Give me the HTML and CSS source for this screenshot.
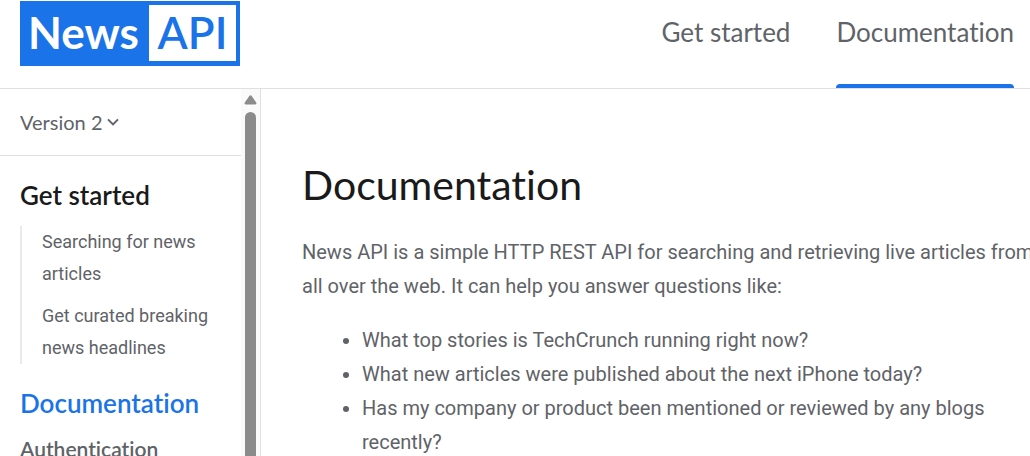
FILE: index.html
```html
<!DOCTYPE html>
<html lang="en">
<head>
<meta charset="utf-8">
<title>Documentation - News API</title>
<link rel="stylesheet" href="styles.css">
</head>
<body class="page">
<header class="header">
  <a class="logo" href="#"><span class="logo-news">News</span><span class="logo-api">API</span></a>
  <nav class="nav" aria-label="Main">
    <a class="nav-link" href="#">Get started</a>
    <a class="nav-link nav-link-active" href="#">Documentation</a>
  </nav>
</header>
<div class="layout">
  <aside class="sidebar">
    <div class="sidebar-content">
      <div class="version">
        <select class="version-select" aria-label="API version"><option>Version 2</option></select>
        <svg class="version-arrow" viewBox="0 0 12 8" aria-hidden="true"><path d="M1 1.4 6 6.4 11 1.4"/></svg>
      </div>
      <nav class="menu" aria-label="Documentation">
        <a class="menu-title" href="#">Get started</a>
        <ul class="submenu">
          <li><a class="submenu-link" href="#">Searching for news articles</a></li>
          <li><a class="submenu-link" href="#">Get curated breaking news headlines</a></li>
        </ul>
        <a class="menu-title menu-title-active" href="#">Documentation</a>
        <a class="menu-section" href="#">Authentication</a>
      </nav>
    </div>
    <div class="scrollbar" aria-hidden="true">
      <svg class="scroll-arrow" viewBox="0 0 13 10"><path d="M5.3 1 Q6.5-.5 7.7 1L12.2 7.6Q13 9.4 11.4 9.4H1.6Q0 9.4.8 7.6Z"/></svg>
      <div class="scroll-thumb"></div>
    </div>
  </aside>
  <main class="main">
    <article class="article">
      <h1 class="title">Documentation</h1>
      <p class="text">News API is a simple HTTP REST API for searching and retrieving live articles from all over the web. It can help you answer questions like:</p>
      <ul class="questions">
        <li>What top stories is TechCrunch running right now?</li>
        <li>What new articles were published about the next iPhone today?</li>
        <li>Has my company or product been mentioned or reviewed by any blogs recently?</li>
      </ul>
    </article>
  </main>
</div>
</body>
</html>
```
FILE: styles.css
```css
* { box-sizing: border-box; }
.page {
  margin: 0;
  height: 100vh;
  display: flex;
  flex-direction: column;
  overflow: hidden;
  background: #fff;
  color: #5f6368;
  font-family: Roboto, "Liberation Sans", sans-serif;
  font-variant-ligatures: none;
}
a { color: inherit; text-decoration: none; }
.header {
  flex: none;
  display: flex;
  justify-content: space-between;
  align-items: stretch;
  padding: 1px 16px 0 20px;
  border-bottom: 1px solid #e0e0e0;
  font-family: Lato, sans-serif;
}
.logo {
  display: flex;
  align-self: flex-start;
  width: 220px;
  height: 65px;
  padding: 4px 4px 5px 0;
  background: #1a73e8;
  font-size: 44px;
  font-weight: 700;
  line-height: 54px;
}
.logo-news { flex: 1; padding-right: 2px; text-align: center; color: #fff; }
.logo-api { width: 87px; text-align: center; background: #fff; color: #1a73e8; font-weight: 600; }
.nav { display: flex; gap: 46px; font-size: 26px; line-height: 62px; }
.nav-link { height: 87px; }
.nav-link-active { position: relative; }
.nav-link-active::after {
  content: "";
  position: absolute;
  right: 0;
  bottom: 0;
  left: 0;
  height: 4px;
  border-radius: 4px 4px 0 0;
  background: #1a73e8;
}
.layout { flex: 1; min-height: 0; display: flex; }
.sidebar {
  flex: none;
  display: flex;
  width: 261px;
  border-right: 1px solid #e0e0e0;
}
.sidebar-content { flex: 1; min-width: 0; overflow: hidden; font-family: Lato, sans-serif; }
.version {
  display: flex;
  align-items: center;
  gap: 4px;
  height: 67px;
  padding-left: 20px;
  border-bottom: 1px solid #e0e0e0;
}
.version-select {
  appearance: none;
  field-sizing: content;
  border: 0;
  padding: 0;
  background: none;
  color: inherit;
  font-family: Lato, sans-serif;
  font-size: 20px;
}
.version-arrow { width: 12px; height: 8px; fill: none; stroke: currentColor; stroke-width: 2; }
.menu { display: flex; flex-direction: column; padding: 23px 20px 0; }
.menu-title { color: #1a1a1a; font-size: 26px; font-weight: 600; line-height: 32px; }
.menu-title-active { color: #1a73e8; }
.submenu {
  display: flex;
  flex-direction: column;
  gap: 10px;
  margin: 15px 0 23px;
  padding: 0 0 0 20px;
  border-left: 2px solid #e8eaed;
  list-style: none;
  font-family: Roboto, sans-serif;
  font-size: 18px;
  line-height: 32px;
}
.submenu-link { display: block; }
.menu-section { margin-top: 14px; font-size: 21px; font-weight: 600; line-height: 32px; }
.scrollbar {
  display: flex;
  flex-direction: column;
  align-items: center;
  gap: 7px;
  width: 19px;
  padding-top: 6px;
  background: #fafafa;
}
.scroll-arrow { flex: none; width: 13px; height: 10px; fill: #8b8b8b; }
.scroll-thumb { flex: 1; width: 11px; border-radius: 6px 6px 0 0; background: #8b8b8b; }
.main { flex: 1; min-width: 0; padding: 71px 0 0 41px; overflow: hidden; }
.article { min-width: 736px; }
.title { margin: 0; color: #1a1a1a; font-family: Lato, sans-serif; font-size: 41px; font-weight: 400; line-height: 50px; }
.text { margin: 25px 0 20px; font-size: 20px; line-height: 34px; }
.questions { margin: 0; padding-left: 60px; font-size: 20px; line-height: 34px; }
```
